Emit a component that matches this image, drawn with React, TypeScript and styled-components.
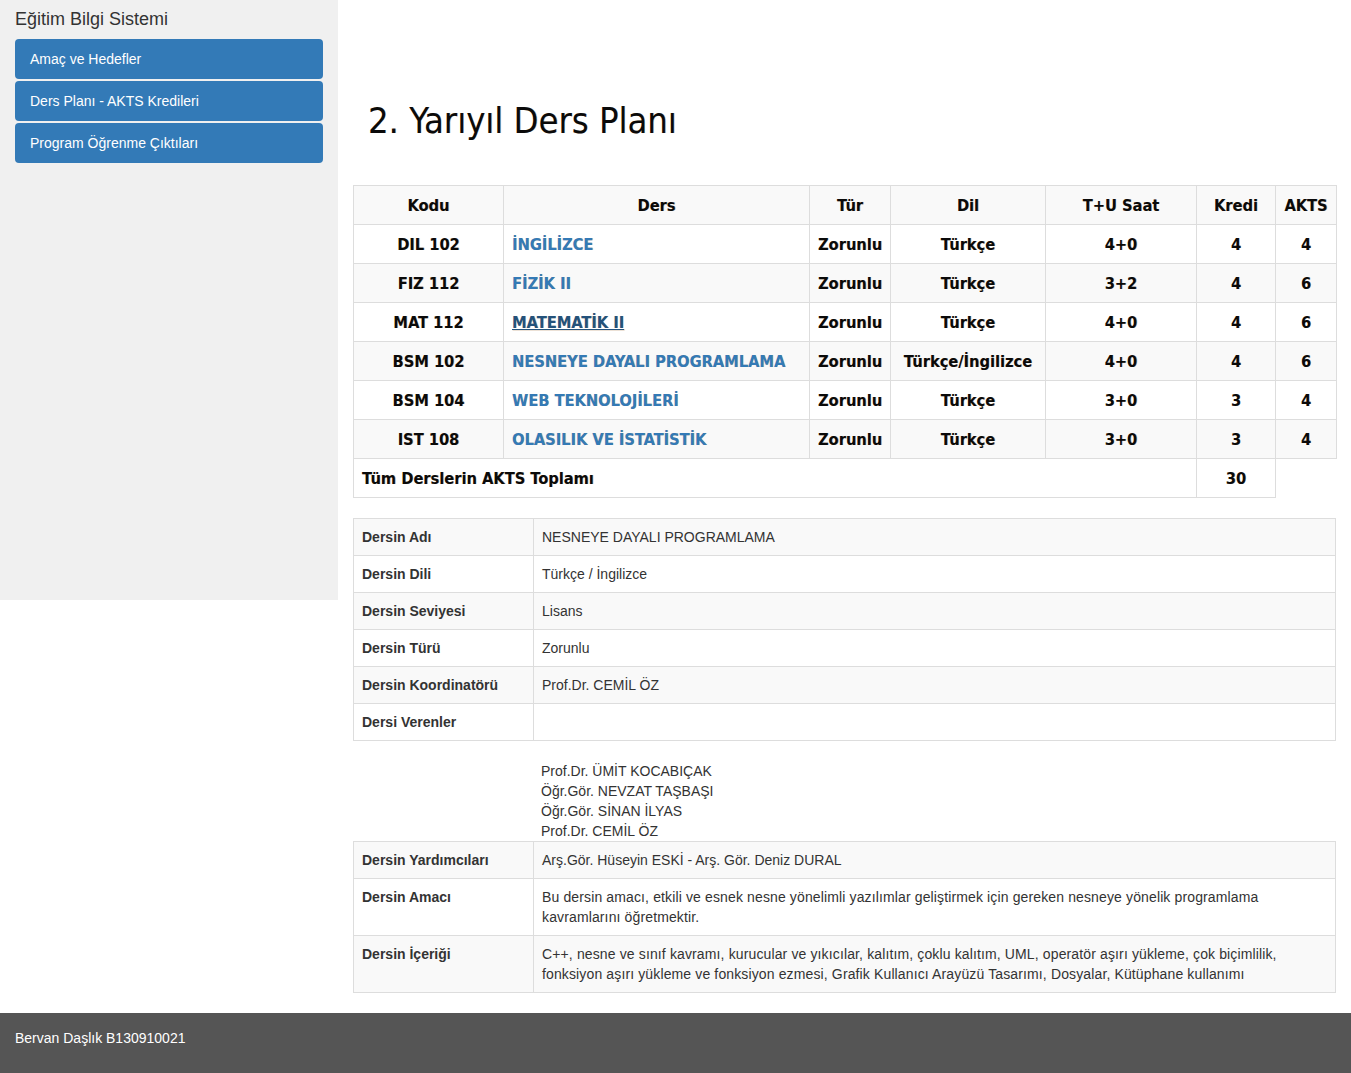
import React from "react";
import styled, { createGlobalStyle } from "styled-components";

const GlobalStyle = createGlobalStyle`
  html, body { margin: 0; padding: 0; background: #fff; }
  body {
    font-family: "Liberation Sans", Arial, sans-serif;
    font-size: 14px;
    color: #333;
  }
  * { box-sizing: border-box; }
`;

const Page = styled.div`
  display: flex;
  flex-direction: column;
  min-height: 1073px;
`;

const Body = styled.div`
  display: flex;
  align-items: flex-start;
  flex: 1;
`;

const Sidebar = styled.aside`
  width: 338px;
  height: 600px;
  flex-shrink: 0;
  background: #f0f0f0;
  padding: 9px 15px 0 15px;
`;

const SideTitle = styled.div`
  font-size: 18px;
  line-height: 20px;
  color: #333;
  margin-bottom: 10px;
`;

const NavList = styled.nav`
  display: flex;
  flex-direction: column;
  gap: 2px;
`;

const NavButton = styled.a`
  display: flex;
  align-items: center;
  height: 40px;
  padding-left: 15px;
  background: #337ab7;
  border-radius: 4px;
  color: #fff;
  font-size: 14px;
  text-decoration: none;
`;

const Main = styled.main`
  flex: 1;
  padding: 0 15px;
`;

const Heading = styled.h1`
  margin: 0;
  padding: 99px 0 0 15px;
  height: 185px;
  font-family: "DejaVu Sans Condensed", "DejaVu Sans", sans-serif;
  font-weight: normal;
  font-size: 36px;
  line-height: 44px;
  color: #0a0a0a;
  text-shadow: 0.6px 0.4px 0.3px rgba(140, 70, 0, 0.35);
`;

const PlanTable = styled.table`
  width: 983px;
  border-collapse: collapse;
  table-layout: fixed;
  font-family: "DejaVu Sans Condensed", "DejaVu Sans", sans-serif;
  font-weight: bold;
  font-size: 16.3px;
  color: #0a0a0a;
  text-shadow: 0.6px 0.4px 0.3px rgba(140, 70, 0, 0.4);
`;

const PlanRow = styled.tr<{ $shade?: boolean }>`
  background: ${(p) => (p.$shade ? "#f9f9f9" : "#fff")};
`;

const PlanCell = styled.td<{ $align?: "left" | "center" }>`
  border: 1px solid #ddd;
  height: 39px;
  padding: 0 8px;
  text-align: ${(p) => p.$align ?? "center"};
  vertical-align: middle;
  white-space: nowrap;
`;

const CourseLink = styled.a<{ $active?: boolean }>`
  color: ${(p) => (p.$active ? "#23527c" : "#337ab7")};
  text-decoration: ${(p) => (p.$active ? "underline" : "none")};
`;

const DetailTable = styled.table`
  width: 983px;
  border-collapse: collapse;
  table-layout: fixed;
  font-size: 14px;
  color: #333;
`;

const DetailRow = styled.tr<{ $shade?: boolean }>`
  background: ${(p) => (p.$shade ? "#f9f9f9" : "#fff")};
`;

const DetailLabel = styled.td`
  width: 180px;
  border: 1px solid #ddd;
  padding: 8px;
  line-height: 20px;
  font-weight: bold;
  vertical-align: top;
`;

const DetailValue = styled.td<{ $prose?: boolean }>`
  border: 1px solid #ddd;
  padding: 8px;
  line-height: 20px;
  vertical-align: top;
  letter-spacing: ${(p) => (p.$prose ? "0.13px" : "0")};
`;

const Spacer = styled.div`
  height: 20px;
`;

const Instructors = styled.div`
  margin-top: 20px;
  padding-left: 188px;
  line-height: 20px;
  font-size: 14px;
  color: #333;
`;

const Footer = styled.footer`
  margin-top: 20px;
  height: 60px;
  background: #555;
  color: #fff;
  padding: 15px 0 0 15px;
  line-height: 20px;
  font-size: 14px;
`;

type Course = {
  code: string;
  name: string;
  type: string;
  lang: string;
  hours: string;
  credit: string;
  akts: string;
  active?: boolean;
};

const courses: Course[] = [
  { code: "DIL 102", name: "İNGİLİZCE", type: "Zorunlu", lang: "Türkçe", hours: "4+0", credit: "4", akts: "4" },
  { code: "FIZ 112", name: "FİZİK II", type: "Zorunlu", lang: "Türkçe", hours: "3+2", credit: "4", akts: "6" },
  { code: "MAT 112", name: "MATEMATİK II", type: "Zorunlu", lang: "Türkçe", hours: "4+0", credit: "4", akts: "6", active: true },
  { code: "BSM 102", name: "NESNEYE DAYALI PROGRAMLAMA", type: "Zorunlu", lang: "Türkçe/İngilizce", hours: "4+0", credit: "4", akts: "6" },
  { code: "BSM 104", name: "WEB TEKNOLOJİLERİ", type: "Zorunlu", lang: "Türkçe", hours: "3+0", credit: "3", akts: "4" },
  { code: "IST 108", name: "OLASILIK VE İSTATİSTİK", type: "Zorunlu", lang: "Türkçe", hours: "3+0", credit: "3", akts: "4" },
];

const details1: [string, string][] = [
  ["Dersin Adı", "NESNEYE DAYALI PROGRAMLAMA"],
  ["Dersin Dili", "Türkçe / İngilizce"],
  ["Dersin Seviyesi", "Lisans"],
  ["Dersin Türü", "Zorunlu"],
  ["Dersin Koordinatörü", "Prof.Dr. CEMİL ÖZ"],
  ["Dersi Verenler", ""],
];

const details2: [string, string, boolean][] = [
  ["Dersin Yardımcıları", "Arş.Gör. Hüseyin ESKİ - Arş. Gör. Deniz DURAL", false],
  [
    "Dersin Amacı",
    "Bu dersin amacı, etkili ve esnek nesne yönelimli yazılımlar geliştirmek için gereken nesneye yönelik programlama kavramlarını öğretmektir.",
    true,
  ],
  [
    "Dersin İçeriği",
    "C++, nesne ve sınıf kavramı, kurucular ve yıkıcılar, kalıtım, çoklu kalıtım, UML, operatör aşırı yükleme, çok biçimlilik, fonksiyon aşırı yükleme ve fonksiyon ezmesi, Grafik Kullanıcı Arayüzü Tasarımı, Dosyalar, Kütüphane kullanımı",
    true,
  ],
];

const instructors = [
  "Prof.Dr. ÜMİT KOCABIÇAK",
  "Öğr.Gör. NEVZAT TAŞBAŞI",
  "Öğr.Gör. SİNAN İLYAS",
  "Prof.Dr. CEMİL ÖZ",
];

export default function App() {
  return (
    <Page>
      <GlobalStyle />
      <Body>
        <Sidebar>
          <SideTitle>Eğitim Bilgi Sistemi</SideTitle>
          <NavList>
            <NavButton href="#">Amaç ve Hedefler</NavButton>
            <NavButton href="#">Ders Planı - AKTS Kredileri</NavButton>
            <NavButton href="#">Program Öğrenme Çıktıları</NavButton>
          </NavList>
        </Sidebar>
        <Main>
          <Heading>2. Yarıyıl Ders Planı</Heading>
          <PlanTable>
            <colgroup>
              <col style={{ width: 150 }} />
              <col style={{ width: 306 }} />
              <col style={{ width: 81 }} />
              <col style={{ width: 155 }} />
              <col style={{ width: 151 }} />
              <col style={{ width: 79 }} />
              <col style={{ width: 61 }} />
            </colgroup>
            <tbody>
              <PlanRow $shade>
                <PlanCell>Kodu</PlanCell>
                <PlanCell>Ders</PlanCell>
                <PlanCell>Tür</PlanCell>
                <PlanCell>Dil</PlanCell>
                <PlanCell>T+U Saat</PlanCell>
                <PlanCell>Kredi</PlanCell>
                <PlanCell>AKTS</PlanCell>
              </PlanRow>
              {courses.map((c, i) => (
                <PlanRow key={c.code} $shade={i % 2 === 1}>
                  <PlanCell>{c.code}</PlanCell>
                  <PlanCell $align="left">
                    <CourseLink href="#" $active={c.active}>
                      {c.name}
                    </CourseLink>
                  </PlanCell>
                  <PlanCell>{c.type}</PlanCell>
                  <PlanCell>{c.lang}</PlanCell>
                  <PlanCell>{c.hours}</PlanCell>
                  <PlanCell>{c.credit}</PlanCell>
                  <PlanCell>{c.akts}</PlanCell>
                </PlanRow>
              ))}
              <PlanRow>
                <PlanCell $align="left" colSpan={5}>
                  Tüm Derslerin AKTS Toplamı
                </PlanCell>
                <PlanCell>30</PlanCell>
              </PlanRow>
            </tbody>
          </PlanTable>
          <Spacer />
          <DetailTable>
            <tbody>
              {details1.map(([k, v], i) => (
                <DetailRow key={k} $shade={i % 2 === 0}>
                  <DetailLabel>{k}</DetailLabel>
                  <DetailValue>{v}</DetailValue>
                </DetailRow>
              ))}
            </tbody>
          </DetailTable>
          <Instructors>
            {instructors.map((n) => (
              <div key={n}>{n}</div>
            ))}
          </Instructors>
          <DetailTable>
            <tbody>
              {details2.map(([k, v, prose], i) => (
                <DetailRow key={k} $shade={i % 2 === 0}>
                  <DetailLabel>{k}</DetailLabel>
                  <DetailValue $prose={prose}>{v}</DetailValue>
                </DetailRow>
              ))}
            </tbody>
          </DetailTable>
        </Main>
      </Body>
      <Footer>Bervan Daşlık B130910021</Footer>
    </Page>
  );
}
